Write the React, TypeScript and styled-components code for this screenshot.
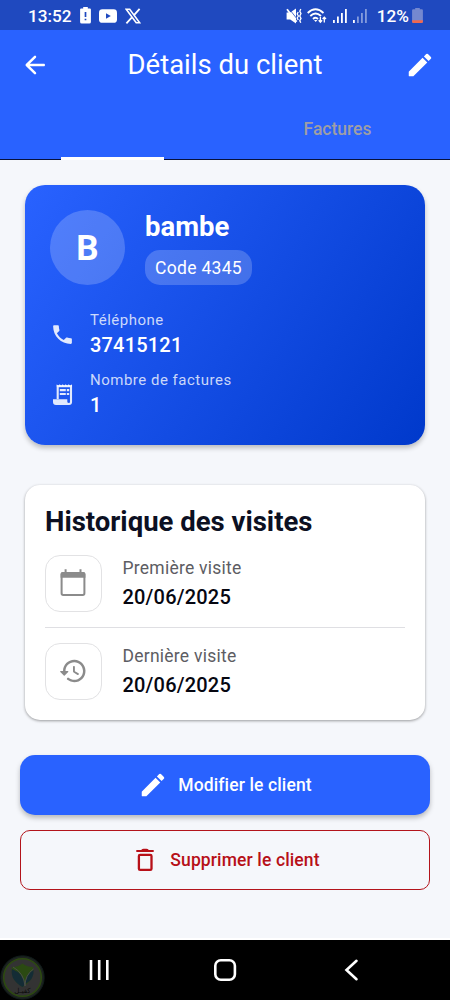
import React from 'react';
import styled, { createGlobalStyle } from 'styled-components';
import { MdPhone } from 'react-icons/md';

const GlobalStyle = createGlobalStyle`
  * { box-sizing: border-box; }
  body { margin: 0; background: #f5f7fb; font-family: Roboto, sans-serif; }
`;

const Screen = styled.div`
  display: flex;
  flex-direction: column;
  width: 450px;
  height: 1000px;
  overflow: hidden;
  background: #f5f7fb;
`;

const StatusBar = styled.div`
  display: flex;
  align-items: center;
  justify-content: space-between;
  height: 30px;
  padding: 1px 27px 0 28px;
  background: #1f49bf;
  color: #fff;
`;

const StatusGroup = styled.div<{ $gap: number }>`
  display: flex;
  align-items: center;
  gap: ${(p) => p.$gap}px;
  svg { display: block; }
`;

const BatteryGroup = styled(StatusGroup)`
  margin-left: 4px;
`;

const StatusText = styled.span`
  padding-top: 1px;
  font-size: 17.2px;
  line-height: 28px;
  font-weight: 500;
`;

const AppBar = styled.header`
  display: flex;
  align-items: center;
  justify-content: space-between;
  height: 70px;
  padding: 0 15px 0 20px;
  background: #2962ff;
  color: #fff;
`;

const IconButton = styled.button`
  display: flex;
  padding: 0;
  border: 0;
  background: none;
  color: inherit;
`;

const Title = styled.h1`
  margin: 0 5px 0 0;
  font-size: 27.5px;
  line-height: 36px;
  font-weight: 400;
`;

const Tabs = styled.nav`
  display: grid;
  grid-template-columns: 1fr 1fr;
  height: 60px;
  background: linear-gradient(#2962ff 59px, #07113a 59px);
`;

const Tab = styled.div<{ $active?: boolean }>`
  display: flex;
  align-items: ${(p) => (p.$active ? 'flex-end' : 'center')};
  justify-content: center;
  padding-bottom: ${(p) => (p.$active ? 0 : 2)}px;
  color: #9e9ea6;
  font-size: 17.5px;
  font-weight: 500;
`;

const TabIndicator = styled.span`
  width: 103px;
  height: 3px;
  background: #fff;
`;

const Content = styled.main`
  display: flex;
  flex: 1;
  flex-direction: column;
  padding: 25px 20px 0;
  border-bottom: 2px solid #fff;
`;

const ClientCard = styled.section`
  height: 260px;
  margin: 0 5px 40px;
  padding: 25px;
  border-radius: 20px;
  background: linear-gradient(123deg, #2962ff, #0039cb);
  box-shadow: 0 3px 5px rgba(0, 0, 0, 0.24);
  color: #fff;
`;

const Identity = styled.div`
  display: flex;
  gap: 20px;
  margin-bottom: 27px;
`;

const Avatar = styled.div`
  display: flex;
  align-items: center;
  justify-content: center;
  width: 75px;
  height: 75px;
  padding-top: 1px;
  border-radius: 50%;
  background: rgba(255, 255, 255, 0.2);
  font-size: 35px;
  font-weight: 700;
`;

const Name = styled.h2`
  margin: 0 0 6px;
  font-size: 27.5px;
  line-height: 34px;
  font-weight: 700;
`;

const CodeBadge = styled.span`
  display: inline-flex;
  align-items: center;
  height: 35px;
  padding: 0 10px;
  border-radius: 15px;
  background: rgba(255, 255, 255, 0.2);
  font-size: 17.5px;
  letter-spacing: 0.31px;
`;

const InfoRow = styled.div`
  display: flex;
  align-items: center;
  gap: 15px;
  height: 45px;
  margin-bottom: 15px;
  svg { color: rgba(255, 255, 255, 0.87); }
`;

const InfoLabel = styled.div`
  color: rgba(255, 255, 255, 0.78);
  font-size: 15px;
  line-height: 20px;
  letter-spacing: 0.5px;
`;

const InfoValue = styled.div`
  font-size: 20px;
  line-height: 30px;
  font-weight: 500;
  letter-spacing: 0.19px;
`;

const VisitsCard = styled.section`
  height: 235px;
  margin: 0 5px 35px;
  padding: 20px;
  border-radius: 15px;
  background: #fff;
  box-shadow: 0 1px 3px rgba(0, 0, 0, 0.38);
`;

const VisitsTitle = styled.h2`
  margin: 0 0 17px;
  color: #0c1022;
  font-size: 27.5px;
  line-height: 33px;
  font-weight: 700;
`;

const VisitRow = styled.div`
  display: flex;
  align-items: center;
  gap: 20.5px;
  height: 57px;
`;

const IconTile = styled.div`
  display: flex;
  align-items: center;
  justify-content: center;
  width: 57px;
  height: 57px;
  padding: 0 1px 1px 0;
  border: 1px solid #e2e2e4;
  border-radius: 15px;
  color: #8b8b8b;
`;

const VisitLabel = styled.div`
  color: #5d5d63;
  font-size: 17.5px;
  line-height: 25px;
  letter-spacing: 0.24px;
`;

const VisitDate = styled.div`
  margin: 3px 0 1px;
  color: #060711;
  font-size: 20px;
  line-height: 27px;
  font-weight: 500;
  letter-spacing: 0.19px;
`;

const Divider = styled.hr`
  height: 1px;
  margin: 15px 0;
  border: 0;
  background: #dfdfe3;
`;

const ActionButton = styled.button<{ $danger?: boolean }>`
  display: flex;
  align-items: center;
  justify-content: center;
  gap: 10px;
  height: 60px;
  margin: 0 0 15px;
  padding: 0;
  border: ${(p) => (p.$danger ? '1px solid #b3141b' : '0')};
  border-radius: ${(p) => (p.$danger ? 10 : 15)}px;
  background: ${(p) => (p.$danger ? 'transparent' : '#2962ff')};
  box-shadow: ${(p) => (p.$danger ? 'none' : '0 3px 5px rgba(0, 0, 0, 0.25)')};
  color: ${(p) => (p.$danger ? '#b71018' : '#fff')};
  font: 500 17.5px/22px Roboto, sans-serif;
  letter-spacing: 0.125px;
`;

const NavBar = styled.footer`
  position: relative;
  display: flex;
  align-items: center;
  justify-content: space-between;
  height: 60px;
  padding: 0 87px;
  background: #000;
`;

const Watermark = styled.svg`
  position: absolute;
  left: 0;
  top: 15px;
`;

const BackIcon = () => (
  <svg width="30" height="30" viewBox="0 0 24 24" fill="currentColor">
    <path d="M19 11H7.83l4.88-4.88c.39-.39.39-1.03 0-1.42a.996.996 0 0 0-1.41 0l-6.59 6.59a.996.996 0 0 0 0 1.41l6.59 6.59a.996.996 0 1 0 1.41-1.41L7.83 13H19c.55 0 1-.45 1-1s-.45-1-1-1z" />
  </svg>
);

const EditIcon = () => (
  <svg width="30" height="30" viewBox="0 0 24 24" fill="currentColor">
    <path d="M3 17.46v3.04c0 .28.22.5.5.5h3.04c.13 0 .26-.05.35-.15L17.81 9.94l-3.75-3.75L3.15 17.1c-.1.1-.15.22-.15.36zM20.71 7.04a.996.996 0 0 0 0-1.41l-2.34-2.34a.996.996 0 0 0-1.41 0l-1.83 1.83 3.75 3.75 1.83-1.83z" />
  </svg>
);

const ReceiptIcon = () => (
  <svg width="25" height="25" viewBox="0 0 25 25" fill="none" stroke="currentColor">
    <path d="M7.7 17V4.2H21V20q0 2-2 2" strokeWidth="2.1" />
    <path d="M6.7 4.6V2.3L8.2 3.7l1.5-1.4 1.5 1.4 1.5-1.4 1.5 1.4 1.5-1.4 1.5 1.4 1.5-1.4 1.5 1.4L22 2.3v2.3z" fill="currentColor" stroke="none" />
    <path d="M3 17.2h14.3v2.6q0 1.3 1.8 1.3V23H6q-3 0-3-3z" fill="currentColor" stroke="none" />
    <path d="M9.8 8.1h6M9.8 12h6M16.8 8.1h2.4M16.8 12h2.4" strokeWidth="2.2" />
  </svg>
);

const CalendarIcon = () => (
  <svg width="30" height="30" viewBox="0 0 30 30" fill="none" stroke="currentColor">
    <rect x="3.6" y="4.9" width="22.8" height="22" rx="1.6" strokeWidth="2" />
    <path d="M2.6 9.7V6q0-2 2-2h20.8q2 0 2 2v3.7z" fill="currentColor" stroke="none" />
    <path d="M7.6 1.3V5M22.5 1.3V5" strokeWidth="2" />
  </svg>
);

const HistoryIcon = () => (
  <svg width="30" height="30" viewBox="0 0 24 24" fill="currentColor">
    <path d="M13.26 3C8.17 2.86 4 6.95 4 12H2.21c-.45 0-.67.54-.35.85l2.79 2.8c.2.2.51.2.71 0l2.79-2.8c.31-.31.09-.85-.36-.85H6c0-3.9 3.18-7.05 7.1-7 3.72.05 6.85 3.18 6.9 6.9.05 3.91-3.1 7.1-7 7.1-1.61 0-3.1-.55-4.28-1.48a.994.994 0 0 0-1.32.08c-.42.42-.39 1.13.08 1.49A8.858 8.858 0 0 0 13 21c5.05 0 9.14-4.17 9-9.26-.13-4.69-4.05-8.61-8.74-8.74zm-.51 5c-.41 0-.75.34-.75.75v3.68c0 .35.19.68.49.86l3.12 1.85c.36.21.82.09 1.03-.26.21-.36.09-.82-.26-1.03l-2.88-1.71v-3.4c0-.4-.34-.74-.75-.74z" />
  </svg>
);

const DeleteIcon = () => (
  <svg width="30" height="30" viewBox="0 0 30 30" fill="none" stroke="currentColor">
    <path d="M6.3 4.9h4.8q1.2-1.2 2.5-1.2h2.8q1.3 0 2.5 1.2h4.8v2H6.3z" fill="currentColor" stroke="none" />
    <rect x="8.9" y="9.9" width="12.6" height="15" rx="1.2" strokeWidth="2.3" />
  </svg>
);

const BatteryAlert = () => (
  <svg width="11" height="17" viewBox="0 0 11 17">
    <path d="M3.2 0h4.6v1.5h2.1q1 0 1 1v12.4q0 1.6-1.6 1.6H1.7Q.1 16.5.1 14.9V2.5q0-1 1-1h2.1z" fill="#fff" />
    <path d="M5.5 5v5M5.5 11.7v1.6" stroke="#1f49bf" strokeWidth="1.7" />
  </svg>
);

const VideoLogo = () => (
  <svg width="18" height="14" viewBox="0 0 18 14">
    <rect width="18" height="13.5" y=".3" rx="3.4" fill="#fff" />
    <path d="M7 4.2v5.6l4.8-2.8z" fill="#1f49bf" />
  </svg>
);

const XLogo = () => (
  <svg width="16" height="16" viewBox="0 0 16 16" fill="none" stroke="#fff">
    <path d="M1.2 1.2h3.5l10 13.6h-3.5z" strokeWidth="1.6" />
    <path d="M14.6.8 9 7.1M6.9 9.3 1.4 15.3" strokeWidth="1.8" />
  </svg>
);

const MutedVibrate = () => (
  <svg width="16" height="16" viewBox="0 0 16 16" fill="none" stroke="#fff">
    <path d="M.6 4.6h3.6L10 .6v14.8l-5.8-4H.6z" fill="#fff" stroke="none" />
    <path d="m3.4 1.2 7.4 9.4" stroke="#1f49bf" strokeWidth=".8" />
    <path d="m1 1.2 9.6 12.6" strokeWidth="1.8" />
    <path d="m12.2 4-1 2 1.2 2-1.2 2 1 2M14.8 1l-1 2.2L15 5.6 13.8 8 15 10.4l-1.2 2.4 1 2" strokeWidth="1.3" />
  </svg>
);

const Wifi = () => (
  <svg width="21" height="16" viewBox="0 0 21 16" fill="none" stroke="#fff">
    <path d="M.7 5Q8.5-2.5 16.5 5M3.3 8Q8.5 3 14 8M6 11q2.6-2.4 5 0" strokeWidth="1.8" />
    <path d="M7 12h3.4l-1.7 2z" fill="#fff" stroke="none" />
    <path d="M13.4 9v5m-1.7-1.7 1.7 1.9 1.7-1.9M17.3 14.5V9.2m-1.7 1.8 1.7-1.9L19 11" strokeWidth="1.3" />
  </svg>
);

const Signal = ({ weak }: { weak?: boolean }) => (
  <svg width="15" height="15" viewBox="0 0 15 15" fill="#fff">
    <rect x="0" y="12" width="1.8" height="3" />
    <g opacity={weak ? 0.45 : 1}>
      <rect x="4" y="8.5" width="1.8" height="6.5" />
      <rect x="8" y="5" width="1.8" height="10" />
      <rect x="12" y="1" width="1.8" height="14" />
    </g>
  </svg>
);

const BatteryLow = () => (
  <svg width="11" height="15" viewBox="0 0 11 15">
    <path d="M3.2 0h4.6v1.3h2q1.1 0 1.1 1v11.2q0 1.5-1.6 1.5H1.7Q.1 15 .1 13.5V2.3q0-1 1.1-1h2z" fill="#7488d0" />
    <path d="M.1 12.3h10.8v1.2q0 1.5-1.6 1.5H1.7Q.1 15 .1 13.5z" fill="#f2684f" />
  </svg>
);

export default function App() {
  return (
    <>
      <GlobalStyle />
      <Screen>
        <StatusBar>
          <StatusGroup $gap={8}>
            <StatusText>13:52</StatusText>
            <BatteryAlert />
            <VideoLogo />
            <XLogo />
          </StatusGroup>
          <StatusGroup $gap={5}>
            <MutedVibrate />
            <Wifi />
            <Signal />
            <Signal weak />
            <BatteryGroup $gap={3}>
              <StatusText>12%</StatusText>
              <BatteryLow />
            </BatteryGroup>
          </StatusGroup>
        </StatusBar>

        <AppBar>
          <IconButton aria-label="Retour"><BackIcon /></IconButton>
          <Title>Détails du client</Title>
          <IconButton aria-label="Modifier"><EditIcon /></IconButton>
        </AppBar>
        <Tabs>
          <Tab $active><TabIndicator /></Tab>
          <Tab>Factures</Tab>
        </Tabs>

        <Content>
          <ClientCard>
            <Identity>
              <Avatar>B</Avatar>
              <div>
                <Name>bambe</Name>
                <CodeBadge>Code 4345</CodeBadge>
              </div>
            </Identity>
            <InfoRow>
              <MdPhone size={25} />
              <div>
                <InfoLabel>Téléphone</InfoLabel>
                <InfoValue>37415121</InfoValue>
              </div>
            </InfoRow>
            <InfoRow>
              <ReceiptIcon />
              <div>
                <InfoLabel>Nombre de factures</InfoLabel>
                <InfoValue>1</InfoValue>
              </div>
            </InfoRow>
          </ClientCard>

          <VisitsCard>
            <VisitsTitle>Historique des visites</VisitsTitle>
            <VisitRow>
              <IconTile><CalendarIcon /></IconTile>
              <div>
                <VisitLabel>Première visite</VisitLabel>
                <VisitDate>20/06/2025</VisitDate>
              </div>
            </VisitRow>
            <Divider />
            <VisitRow>
              <IconTile><HistoryIcon /></IconTile>
              <div>
                <VisitLabel>Dernière visite</VisitLabel>
                <VisitDate>20/06/2025</VisitDate>
              </div>
            </VisitRow>
          </VisitsCard>

          <ActionButton><EditIcon />Modifier le client</ActionButton>
          <ActionButton $danger><DeleteIcon />Supprimer le client</ActionButton>
        </Content>

        <NavBar>
          <Watermark width="45" height="45" viewBox="0 0 45 45">
            <circle cx="22.5" cy="22.5" r="21.7" fill="#1d2220" stroke="#101c1a" strokeWidth="1" />
            <circle cx="22.5" cy="22.5" r="18.8" fill="#333" stroke="#2c4a10" strokeWidth="1.6" />
            <path d="M12 12q6 0 10.5-3.5Q27 12 33 12q2 13-10.5 20Q10 25 12 12z" fill="#2b4a12" />
            <path d="M12 14q11 4 13 16l-2.5 2Q10 25 12 14zM33.5 15q-8 4-8 14 9-5 8-14z" fill="#142c35" />
            <path d="M13 12q11 6 12 19 0-11 8.5-17" fill="none" stroke="#4a4d4a" strokeWidth="1" />
            <text x="22.5" y="37.5" fill="#0c0c0c" fontSize="7" textAnchor="middle" fontFamily="DejaVu Sans, sans-serif">كفيـل</text>
          </Watermark>
          <svg width="24" height="24" viewBox="0 0 24 24" stroke="#fff" strokeWidth="2.6">
            <path d="M4 2v20M12.2 2v20M20.3 2v20" />
          </svg>
          <svg width="24" height="24" viewBox="0 0 24 24" fill="none" stroke="#fff" strokeWidth="2.6">
            <rect x="2.3" y="2.3" width="19.6" height="19.4" rx="5.5" />
          </svg>
          <svg width="24" height="24" viewBox="0 0 24 24" fill="none" stroke="#fff" strokeWidth="2.6" strokeLinecap="round">
            <path d="M17.5 2.8 7.5 12l10 9.2" />
          </svg>
        </NavBar>
      </Screen>
    </>
  );
}
